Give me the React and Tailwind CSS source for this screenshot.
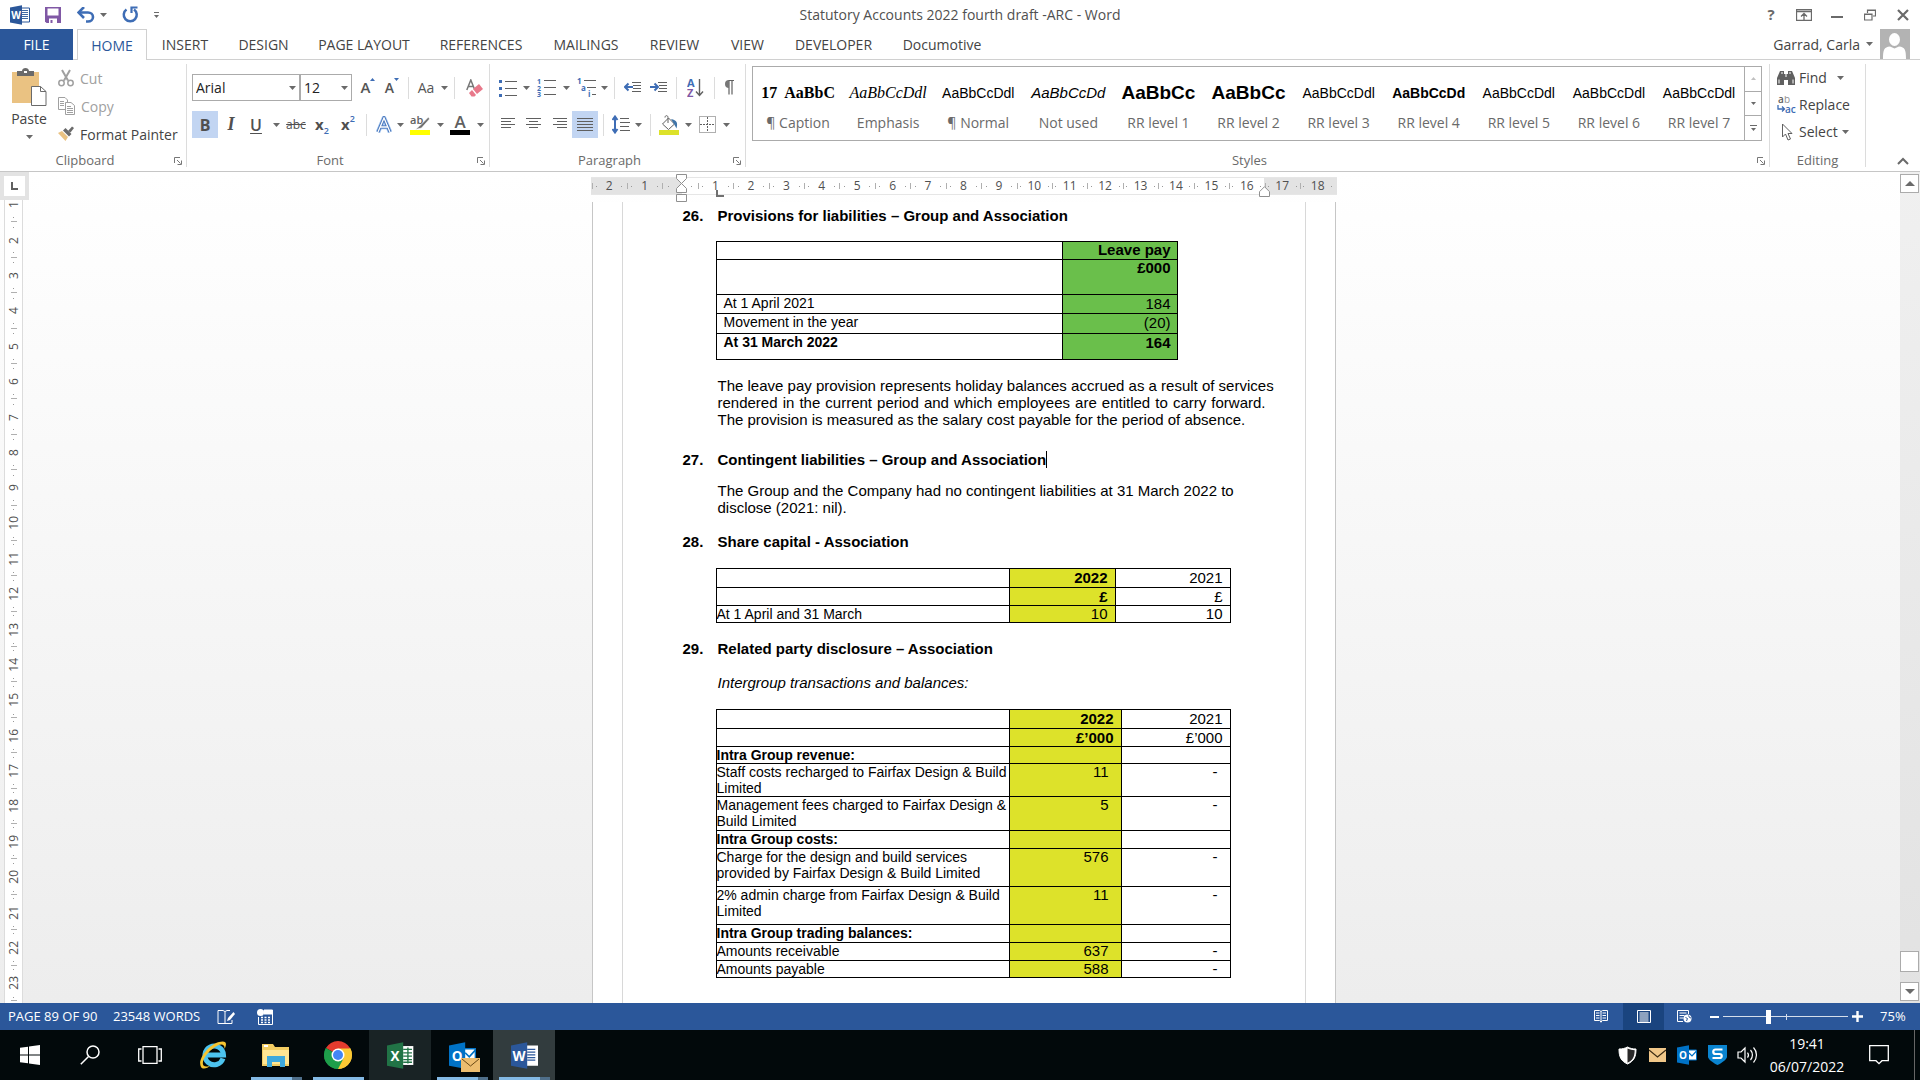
import React, { useState } from 'react';
import clsx from 'clsx';

const TABS = [
  { name: 'INSERT', width: 'w-[76px]' },
  { name: 'DESIGN', width: 'w-[81px]' },
  { name: 'PAGE LAYOUT', width: 'w-[120px]' },
  { name: 'REFERENCES', width: 'w-[114px]' },
  { name: 'MAILINGS', width: 'w-[96px]' },
  { name: 'REVIEW', width: 'w-[81px]' },
  { name: 'VIEW', width: 'w-[65px]' },
  { name: 'DEVELOPER', width: 'w-[107px]' },
  { name: 'Documotive', width: 'w-[110px]' },
];

const ARIAL = "font-['Liberation_Sans',Arial,sans-serif]";
const TIMES = "font-['Liberation_Serif','Times_New_Roman',serif]";

const STYLES = [
  { name: '¶ Caption', sample: '17  AaBbC', look: `${TIMES} text-base font-bold` },
  { name: 'Emphasis', sample: 'AaBbCcDdl', look: `${TIMES} text-base italic` },
  { name: '¶ Normal', sample: 'AaBbCcDdl', look: `${ARIAL} text-[14px]` },
  { name: 'Not used', sample: 'AaBbCcDd', look: `${ARIAL} text-[15px] italic` },
  { name: 'RR level 1', sample: 'AaBbCc', look: `${ARIAL} text-[19px] font-bold` },
  { name: 'RR level 2', sample: 'AaBbCc', look: `${ARIAL} text-[19px] font-bold` },
  { name: 'RR level 3', sample: 'AaBbCcDdl', look: `${ARIAL} text-[14px]` },
  { name: 'RR level 4', sample: 'AaBbCcDd', look: `${ARIAL} text-[14px] font-bold` },
  { name: 'RR level 5', sample: 'AaBbCcDdl', look: `${ARIAL} text-[14px]` },
  { name: 'RR level 6', sample: 'AaBbCcDdl', look: `${ARIAL} text-[14px]` },
  { name: 'RR level 7', sample: 'AaBbCcDdl', look: `${ARIAL} text-[14px]` },
];

const RELATED_ROWS = [
  { label: 'Intra Group revenue:', heading: true, height: 'h-[17px]' },
  { label: 'Staff costs recharged to Fairfax Design & Build Limited', now: '11', before: '-', height: 'h-[33px]' },
  { label: 'Management fees charged to Fairfax Design & Build Limited', now: '5', before: '-', height: 'h-[34px]' },
  { label: 'Intra Group costs:', heading: true, height: 'h-[18px]' },
  { label: 'Charge for the design and build services provided by Fairfax Design & Build Limited', now: '576', before: '-', height: 'h-[38px]' },
  { label: '2% admin charge from Fairfax Design & Build Limited', now: '11', before: '-', height: 'h-[38px]' },
  { label: 'Intra Group trading balances:', heading: true, height: 'h-[18px]' },
  { label: 'Amounts receivable', now: '637', before: '-', height: 'h-[18px]' },
  { label: 'Amounts payable', now: '588', before: '-', height: 'h-[17px]' },
];

/* ---------- small building blocks ---------- */

const Svg = ({ w, h, children, className }) => (
  <svg width={w} height={h} viewBox={`0 0 ${w} ${h}`} fill="none" className={clsx('block shrink-0', className)} aria-hidden="true">
    {children}
  </svg>
);

const Caret = ({ color = '#6a6a6a' }) => (
  <Svg w={7} h={4}>
    <path d="M0 0h7L3.5 4z" fill={color} />
  </Svg>
);

const Tool = ({ label, width, active, children }) => (
  <button
    aria-label={label}
    className={clsx('flex h-[27px] shrink-0 items-center justify-center', width, active && 'bg-[#c2d5f2]')}
  >
    {children}
  </button>
);

const Sep = ({ width }) => (
  <span className={clsx('flex h-[22px] shrink-0 justify-center', width)}>
    <span className="w-px bg-[#dcdcdc]" />
  </span>
);

const Launcher = ({ label }) => (
  <button aria-label={label} className="flex size-4 items-center justify-center">
    <Svg w={8} h={8}>
      <path d="M.5 6V.5H6M3 3l3.5 3.5M7.500 3.500v4h-4" stroke="#777" />
    </Svg>
  </button>
);

const Group = ({ name, width, launcher, children }) => (
  <section className={clsx('my-1 flex shrink-0 flex-col border-r border-[#dcdcdc]', width)}>
    <div className="min-h-0 flex-1">{children}</div>
    <div className="flex h-3 items-center text-[13px] text-[#6a6a6a]">
      <span className="flex-1 text-center">{name}</span>
      {launcher && <Launcher label={`${name} settings`} />}
    </div>
  </section>
);

const Lines = ({ rows }) => (
  <Svg w={16} h={13}>
    {rows.map(([x, w], i) => (
      <rect key={i} x={x} y={i * 3} width={w} height="1" fill="#606060" />
    ))}
  </Svg>
);

/* ---------- application logos ---------- */

const OfficeLogo = ({ letter, color, size = 20, ink = '#fff', children }) => (
  <svg width={size} height={size} viewBox="0 0 20 20" aria-hidden="true" className="block shrink-0">
    {children}
    <path d="M0 2.500 12 .2v19.600L0 17.500z" fill={color} />
    <text x="6" y="13.800" textAnchor="middle" fontSize="10" fontWeight="700" fontFamily="Open Sans, sans-serif" fill={ink}>
      {letter}
    </text>
  </svg>
);

const WordLogo = ({ size, dark }) => (
  <OfficeLogo letter="W" color="#2b579a" size={size}>
    <path d="M11 3h8.500v14H11z" fill="#fff" stroke={dark ? '#fff' : '#2b579a'} />
    <path d="M12 5.500h6M12 7.500h6M12 9.500h6M12 11.500h6M12 13.500h6" stroke="#2b579a" strokeWidth=".9" />
  </OfficeLogo>
);

const ExcelLogo = () => (
  <OfficeLogo letter="X" color="#217346" size={27}>
    <path d="M11 3h8.500v14H11z" fill="#fff" />
    <path d="M12 5.500h6.500M12 8h6.500M12 10.500h6.500M12 13h6.500M12 15h6.500M15.500 4v12" stroke="#217346" />
  </OfficeLogo>
);

const OutlookLogo = ({ size, badge }) => (
  <div className="relative">
    <OfficeLogo letter="O" color="#0072c6" size={size}>
      <path d="M11 5h8.500v10H11z" fill="#fff" stroke="#0072c6" />
      <path d="m12 8 3 3 4.500-5" stroke="#0072c6" strokeWidth="1.200" fill="none" />
    </OfficeLogo>
    {badge && (
      <span className="absolute top-4 left-3">
        <Svg w={19} h={14}>
          <path d="M0 0h19v14H0z" fill="#edbd6f" />
          <path d="m1 1 8.500 7L18 1" stroke="#6b4a17" />
        </Svg>
      </span>
    )}
  </div>
);

/* ---------- title bar and tabs ---------- */

const TitleBar = () => (
  <header className="relative flex h-[29px] items-center justify-between">
    <div className="flex items-center pl-[10px]">
      <WordLogo size={20} />
      <button aria-label="Save" className="ml-[15px]">
        <Svg w={16} h={16}>
          <path d="M0 0h16v16H1.500L0 14.500z" fill="#8058a5" />
          <path d="M2.500 1.500h11v7h-11zM4 11.500h8V16H4z" fill="#fff" />
          <path d="M5.500 13h2v3h-2z" fill="#8058a5" />
        </Svg>
      </button>
      <button aria-label="Undo" className="ml-[16px]">
        <Svg w={18} h={16}>
          <path d="M3 5.500h8a5 4.500 0 0 1 0 9H9" stroke="#3e6db5" strokeWidth="2.600" />
          <path d="m7 0-5.500 5.500L7 11" stroke="#3e6db5" strokeWidth="2.600" />
        </Svg>
      </button>
      <button aria-label="Undo list" className="ml-[5px]"><Caret /></button>
      <button aria-label="Repeat" className="ml-[15px]">
        <Svg w={17} h={17}>
          <path d="M4.500 3.500a6.500 6.500 0 1 0 7.500 0" stroke="#3e6db5" strokeWidth="2.500" />
          <path d="M9.500 7V1.500h6" stroke="#3e6db5" strokeWidth="2.200" />
        </Svg>
      </button>
      <button aria-label="Customise Quick Access Toolbar" className="ml-[15px] flex flex-col items-center gap-[2px]">
        <span className="h-px w-[5px] bg-[#6a6a6a]" />
        <Svg w={5} h={3}><path d="M0 0h5L2.500 3z" fill="#6a6a6a" /></Svg>
      </button>
    </div>
    <h1 className="absolute inset-x-0 text-center text-[14px] text-[#505050]">
      Statutory Accounts 2022 fourth draft -ARC - Word
    </h1>
    <div className="relative flex items-center pr-px text-[#6a6a6a]">
      <button aria-label="Help" className="flex w-8 justify-center text-[15px] font-bold">?</button>
      <button aria-label="Ribbon display options" className="flex w-[34px] justify-center">
        <Svg w={16} h={12}>
          <path d="M.5.5h15v11H.5zM.5 2.500h15M8 11V5M5 7.500l3-3 3 3" stroke="#6a6a6a" strokeWidth="1.300" />
        </Svg>
      </button>
      <button aria-label="Minimise" className="flex w-8 justify-center pt-1">
        <span className="h-[2px] w-3 bg-[#6a6a6a]" />
      </button>
      <button aria-label="Restore" className="flex w-[34px] justify-center">
        <Svg w={12} h={12}>
          <path d="M.5 5h7.500v6H.5zM.5 5.500H8M3.500 4V1h8v6H9M3.500 1.500h8" stroke="#6a6a6a" strokeWidth="1.200" />
        </Svg>
      </button>
      <button aria-label="Close" className="flex w-8 justify-center">
        <Svg w={12} h={12}>
          <path d="m1 1 10 10M11 1 1 11" stroke="#6a6a6a" strokeWidth="2.200" />
        </Svg>
      </button>
    </div>
  </header>
);

const TabBar = () => (
  <nav className="flex h-[31px] border-b border-[#d0d0d0] text-[14px] whitespace-nowrap text-[#444]">
    <button className="h-[31px] w-[73px] bg-[#2b579a] text-white">FILE</button>
    <button className="ml-1 h-[31px] w-[70px] border border-b-0 border-[#d0d0d0] bg-white text-[#2b579a]">HOME</button>
    {TABS.map((tab) => (
      <button key={tab.name} className={clsx('shrink-0', tab.width)}>{tab.name}</button>
    ))}
    <div className="ml-auto flex items-center pr-[10px]">
      <button className="flex items-center gap-[6px]">
        Garrad, Carla
        <Caret />
      </button>
      <Svg w={30} h={30} className="ml-[7px]">
        <path d="M0 0h30v30H0z" fill="#b3b3b3" />
        <ellipse cx="14.500" cy="10.500" rx="5.500" ry="6.500" fill="#fff" />
        <path d="M3 30c0-9 1-12 7-12.500l4.500 2 4.500-2c6 .5 7 3.500 7 12.500z" fill="#fff" />
      </Svg>
    </div>
  </nav>
);

/* ---------- ribbon groups ---------- */

const ClipboardGroup = () => (
  <Group name="Clipboard" width="w-[187px]" launcher>
    <div className="flex whitespace-nowrap">
      <button className="flex w-[58px] flex-col items-center pt-1 text-[14px] text-[#444]">
        <Svg w={35} h={39}>
          <path d="M0 4h27v31H0z" fill="#eac282" />
          <path d="M5 8V3h5c0-4 7-4 7 0h5v5z" fill="#6a6a6a" />
          <path d="M12 3h3v2h-3z" fill="#fff" />
          <path d="M19.500 18.500h9l5.500 5v14H19.500z" fill="#fff" stroke="#6a6a6a" />
          <path d="M28.500 18.500v5H34" stroke="#6a6a6a" />
        </Svg>
        <span className="mt-[2px] leading-5">Paste</span>
        <span className="mt-[6px]"><Caret /></span>
      </button>
      <div className="text-[14px]">
        <button className="flex h-7 items-center gap-[6px] text-[#a0a0a0]">
          <Svg w={16} h={18}>
            <path d="m4 1 6 10.500M12 1 6 11.500" stroke="#a0a0a0" strokeWidth="2" />
            <circle cx="3.500" cy="14" r="2.700" stroke="#a0a0a0" strokeWidth="1.500" />
            <circle cx="12.500" cy="14" r="2.700" stroke="#a0a0a0" strokeWidth="1.500" />
          </Svg>
          Cut
        </button>
        <button className="flex h-7 items-center gap-[6px] text-[#a0a0a0]">
          <Svg w={17} h={18}>
            <path d="M.5.5H7L9.500 3v9.500h-9z" fill="#fff" stroke="#a0a0a0" />
            <path d="M2 4.500h4M2 6.500h4M2 8.500h4" stroke="#a0a0a0" />
            <path d="M7.500 5.500H13L16.500 8.500v9h-9z" fill="#fff" stroke="#a0a0a0" />
            <path d="M9 9.500h4M9 11.500h6M9 13.500h6M9 15.500h6" stroke="#a0a0a0" />
          </Svg>
          Copy
        </button>
        <button className="flex h-7 items-center gap-[6px] text-[#444]">
          <Svg w={16} h={16}>
            <path d="m0 7 4-2 6 6-2.500 4z" fill="#eac282" />
            <path d="m5 4.500 2.500-2.500 6 6L11 10.500z" fill="#6a6a6a" />
            <path d="m10 5 4-4.500 2 1.500-3.500 4.500z" fill="#6a6a6a" />
          </Svg>
          Format Painter
        </button>
      </div>
    </div>
  </Group>
);

const Combo = ({ label, value, width }) => (
  <div className={clsx('relative flex h-[27px] shrink-0 items-center', width)}>
    <select
      aria-label={label}
      defaultValue={value}
      className="h-full w-full appearance-none border border-[#ababab] bg-white pl-[3px] text-[14px] text-[#222]"
    >
      <option>{value}</option>
    </select>
    <span className="pointer-events-none absolute right-1"><Caret /></span>
  </div>
);

const FontGroup = () => (
  <Group name="Font" width="w-[303px]" launcher>
    <div className="flex items-center pt-[10px] pl-[5px] text-[#555]">
      <Combo label="Font name" value="Arial" width="w-[108px]" />
      <Combo label="Font size" value="12" width="w-[52px]" />
      <span className="w-1 shrink-0" />
      <Tool label="Grow font" width="w-6">
        <span className="text-[15px] font-semibold">A</span>
        <span className="self-start pt-1"><Svg w={5} h={3}><path d="M2.500 0 5 3H0z" fill="#3e6db5" /></Svg></span>
      </Tool>
      <Tool label="Shrink font" width="w-6">
        <span className="text-[14px] font-semibold">A</span>
        <span className="self-start pt-1"><Svg w={5} h={3}><path d="M0 0h5L2.500 3z" fill="#3e6db5" /></Svg></span>
      </Tool>
      <Sep width="w-2" />
      <Tool label="Change case" width="w-7"><span className="text-[14px]">Aa</span></Tool>
      <Tool label="Change case list" width="w-2"><Caret /></Tool>
      <Sep width="w-3" />
      <Tool label="Clear formatting" width="w-7">
        <Svg w={17} h={18}>
          <path d="m.8 11 4-10 4 10M2.200 7.500h5" stroke="#777" strokeWidth="1.500" />
          <path d="m7 10 6-5 4 5-6 5z" fill="#e8788a" />
          <path d="m6 11 4 5-1.500 1.500H5.500L3 14z" fill="#e8788a" />
        </Svg>
      </Tool>
    </div>
    <div className="flex items-center pt-[10px] pl-[5px] text-[#505050]">
      <Tool label="Bold" width="w-[26px]" active><span className="text-[16px] font-bold">B</span></Tool>
      <Tool label="Italic" width="w-[26px]"><span className={`${TIMES} text-[18px] font-bold italic`}>I</span></Tool>
      <Tool label="Underline" width="w-6"><span className="text-[16px] font-semibold underline underline-offset-2">U</span></Tool>
      <Tool label="Underline list" width="w-4"><Caret /></Tool>
      <Tool label="Strikethrough" width="w-6"><span className="text-[12px] line-through">abc</span></Tool>
      <Tool label="Subscript" width="w-7">
        <span className="text-[15px] font-bold">x</span>
        <span className="pt-3 text-[9px] font-semibold text-[#3e6db5]">2</span>
      </Tool>
      <Tool label="Superscript" width="w-6">
        <span className="text-[15px] font-bold">x</span>
        <span className="pb-3 text-[9px] font-semibold text-[#3e6db5]">2</span>
      </Tool>
      <Sep width="w-3" />
      <Tool label="Text effects" width="w-6">
        <Svg w={16} h={18}>
          <path d="M2 16 8 2l6 14M4.500 11h7" stroke="#9cc0ee" strokeWidth="4.500" strokeLinejoin="round" />
          <path d="M2 16 8 2l6 14M4.500 11h7" stroke="#3e6db5" strokeWidth="3" />
          <path d="M2 16 8 2l6 14M4.500 11h7" stroke="#fff" strokeWidth="1.300" />
        </Svg>
      </Tool>
      <Tool label="Text effects list" width="w-2"><Caret /></Tool>
      <Tool label="Highlight colour" width="w-8">
        <Svg w={20} h={20}>
          <text x="0" y="9" fontSize="11" fontWeight="600" fontFamily="Open Sans, sans-serif" fill="#606060">ab</text>
          <path d="m18.500 2-9 9-4 3.500 6-1.500 8-9z" fill="#707070" stroke="#fff" strokeWidth=".6" />
          <path d="M0 15h20v5H0z" fill="#ff0" />
        </Svg>
      </Tool>
      <Tool label="Highlight colour list" width="w-2"><Caret /></Tool>
      <Tool label="Font colour" width="w-8">
        <Svg w={20} h={20}>
          <text x="10" y="13" textAnchor="middle" fontSize="17" fontWeight="600" fontFamily="Open Sans, sans-serif" fill="#606060">A</text>
          <path d="M0 15h20v5H0z" fill="#000" />
        </Svg>
      </Tool>
      <Tool label="Font colour list" width="w-2"><Caret /></Tool>
    </div>
  </Group>
);

const IndentIcon = ({ flip }) => (
  <Svg w={18} h={13}>
    <path d="M8 1.500h9M9 4.500h8M9 7.500h8M8 10.500h9" stroke="#606060" />
    <path
      d={flip ? 'M0 6h7M4.500 2.500 8 6 4.500 9.500' : 'M1 6h8M4.500 2.500 1 6l3.500 3.500'}
      stroke="#3e6db5"
      strokeWidth="2"
    />
  </Svg>
);

const ParagraphGroup = () => (
  <Group name="Paragraph" width="w-[256px]" launcher>
    <div className="flex items-center pt-[10px] pl-[6px]">
      <Tool label="Bullets" width="w-6">
        <Svg w={18} h={18}>
          <path d="M0 1h3v3H0zM0 8h3v3H0zM0 15h3v3H0z" fill="#3e6db5" />
          <path d="M6 2.500h12M6 9.500h12M6 16.500h12" stroke="#606060" />
        </Svg>
      </Tool>
      <Tool label="Bullets list" width="w-3"><Caret /></Tool>
      <Tool label="Numbering" width="w-7">
        <Svg w={19} h={19}>
          <g fill="#3e6db5" fontSize="7" fontWeight="700" fontFamily="Open Sans, sans-serif">
            <text x="0" y="6">1</text><text x="0" y="12.500">2</text><text x="0" y="19">3</text>
          </g>
          <path d="M7 2.500h12M7 9.500h12M7 16.500h12" stroke="#606060" />
        </Svg>
      </Tool>
      <Tool label="Numbering list" width="w-3"><Caret /></Tool>
      <Tool label="Multilevel list" width="w-7">
        <Svg w={19} h={19}>
          <g fill="#3e6db5" fontSize="8" fontWeight="700" fontFamily="Open Sans, sans-serif">
            <text x="0" y="6">1</text><text x="4" y="12.500">a</text><text x="11" y="19">i</text>
          </g>
          <path d="M7 2.500h12M10 9.500h9M15 16.500h4" stroke="#606060" />
        </Svg>
      </Tool>
      <Tool label="Multilevel list options" width="w-2"><Caret /></Tool>
      <Sep width="w-3" />
      <Tool label="Decrease indent" width="w-[26px]"><IndentIcon /></Tool>
      <Tool label="Increase indent" width="w-[26px]"><IndentIcon flip /></Tool>
      <Sep width="w-2" />
      <Tool label="Sort" width="w-[30px]">
        <Svg w={17} h={20}>
          <g fontSize="11" fontWeight="700" fontFamily="Open Sans, sans-serif">
            <text x="0" y="9" fill="#3e6db5">A</text>
            <text x="0" y="19" fill="#8058a5">Z</text>
          </g>
          <path d="M12.500 1v16M9 13.500l3.500 4 3.500-4" stroke="#606060" strokeWidth="1.400" />
        </Svg>
      </Tool>
      <Sep width="w-2" />
      <Tool label="Show paragraph marks" width="w-5">
        <Svg w={11} h={15}>
          <path d="M5 .5h6M6 .5v14M9 .5v14" stroke="#606060" strokeWidth="1.200" />
          <path d="M6 0a3.800 3.800 0 0 0 0 8z" fill="#777" />
        </Svg>
      </Tool>
    </div>
    <div className="flex items-center pt-[10px] pl-[6px]">
      <Tool label="Align left" width="w-6"><Lines rows={[[1, 14], [1, 10], [1, 14], [1, 10]]} /></Tool>
      <Tool label="Centre" width="w-7"><Lines rows={[[0, 15], [3, 9], [0, 15], [3, 9]]} /></Tool>
      <Tool label="Align right" width="w-6"><Lines rows={[[1, 14], [5, 10], [1, 14], [5, 10]]} /></Tool>
      <Tool label="Justify" width="w-[26px]" active><Lines rows={[[0, 16], [0, 16], [0, 16], [0, 16], [0, 16]]} /></Tool>
      <Sep width="w-[10px]" />
      <Tool label="Line spacing" width="w-[26px]">
        <Svg w={18} h={19}>
          <path d="M3 2v15M.5 5 3 1.500 5.500 5M.5 14 3 17.500 5.500 14" stroke="#3e6db5" strokeWidth="2" />
          <path d="M8 3.500h9M8 7.500h10M8 11.500h9M8 15.500h10" stroke="#606060" />
        </Svg>
      </Tool>
      <Tool label="Line spacing list" width="w-2"><Caret /></Tool>
      <Sep width="w-4" />
      <Tool label="Shading" width="w-[22px]">
        <Svg w={20} h={20}>
          <path d="m3.500 9 6-6 6 6-6 5.500z" fill="#fff" stroke="#606060" />
          <path d="M9 8V2.500c0-2.500-3-2.500-3 0" stroke="#606060" />
          <path d="M12 4c6 1 7 4 5.500 9.500L15 9z" fill="#3f74a8" />
          <path d="M0 15h20v5H0z" fill="#dde22a" />
        </Svg>
      </Tool>
      <Tool label="Shading list" width="w-4"><Caret /></Tool>
      <Tool label="Borders" width="w-[22px]">
        <Svg w={17} h={17}>
          <path d="M.5.5h16v16H.5z" stroke="#606060" strokeDasharray="1 1" />
          <path d="M8.500 1v15M1 8.500h15" stroke="#606060" strokeDasharray="2 1" />
        </Svg>
      </Tool>
      <Tool label="Borders list" width="w-4"><Caret /></Tool>
    </div>
  </Group>
);

const StylesGroup = () => (
  <Group name="Styles" width="min-w-0 flex-1" launcher>
    <div className="mt-[2px] mr-[7px] ml-[6px] flex h-[75px] border border-[#ababab]">
      <div className="flex min-w-0 flex-1">
        {STYLES.map((style) => (
          <button key={style.name} className="flex min-w-0 flex-1 flex-col items-center whitespace-pre">
            <span className={clsx('mt-[14px] h-6 leading-6 text-black', style.look)}>
              {style.sample}
            </span>
            <span className="mt-2 text-[14px] leading-5 text-[#6a6a6a]">{style.name}</span>
          </button>
        ))}
      </div>
      <div className="flex w-[17px] flex-col border-l border-[#ababab]">
        <button aria-label="Previous styles" className="flex flex-1 items-center justify-center">
          <Svg w={5} h={3}><path d="M2.500 0 5 3H0z" fill="#c0c0c0" /></Svg>
        </button>
        <button aria-label="Next styles" className="flex flex-1 items-center justify-center border-y border-[#ababab]">
          <Svg w={5} h={3}><path d="M0 0h5L2.500 3z" fill="#6a6a6a" /></Svg>
        </button>
        <button aria-label="More styles" className="flex flex-1 flex-col items-center justify-center gap-[2px]">
          <span className="h-px w-[7px] bg-[#6a6a6a]" />
          <Svg w={5} h={3}><path d="M0 0h5L2.500 3z" fill="#6a6a6a" /></Svg>
        </button>
      </div>
    </div>
  </Group>
);

const EditingGroup = () => (
  <Group name="Editing" width="w-[96px]">
    <div className="pl-[7px] text-[14px] text-[#444]">
      <button className="flex h-[27px] items-center gap-1">
        <Svg w={18} h={16}>
          <path d="M0 8 3 1h4v14H0zM11 1h4l3 7v7h-7z" fill="#606060" />
          <path d="M7 4h4v6H7z" fill="#606060" />
          <path d="M2 9.500v4M16 9.500v4M9 4v3M4 3h2M12 3h2" stroke="#fff" />
        </Svg>
        <span className="mr-[6px]">Find</span>
        <Caret />
      </button>
      <button className="flex h-[27px] items-center gap-1">
        <Svg w={20} h={18} className="-mr-[2px]">
          <g fontSize="10" fontFamily="Open Sans, sans-serif">
            <text x="1" y="7" fontWeight="600" fill="#606060">a</text>
            <text x="7" y="7" fill="#909090">b</text>
            <text x="8" y="17" fontWeight="600" fill="#3e6db5">ac</text>
          </g>
          <path d="M1 9v4h6M5 10.500 7.500 13 5 15.500" stroke="#3e6db5" strokeWidth="1.300" />
        </Svg>
        Replace
      </button>
      <button className="flex h-[27px] items-center gap-1">
        <Svg w={18} h={18}>
          <path d="M5.500 1v13l3-3 2.500 6 2.500-1-2.500-5.500h4z" stroke="#606060" />
        </Svg>
        <span>Select</span>
        <Caret />
      </button>
    </div>
  </Group>
);

const Ribbon = () => (
  <div className="flex h-[112px] border-b border-[#c6c6c6]">
    <ClipboardGroup />
    <FontGroup />
    <ParagraphGroup />
    <StylesGroup />
    <EditingGroup />
    <div className="flex w-[54px] shrink-0 items-end justify-end pr-[11px] pb-[6px]">
      <button aria-label="Collapse the ribbon">
        <Svg w={12} h={8}><path d="m1 7 5-5 5 5" stroke="#6a6a6a" strokeWidth="2" /></Svg>
      </button>
    </div>
  </div>
);

/* ---------- rulers ---------- */

// each cell is one centimetre wide and is centred on its number
const RULER_CM = Array.from({ length: 21 }, (_, i) => i - 2);

const HorizontalRuler = () => (
  <div className="relative h-[18px] w-[746px] bg-white text-[12px] text-[#505050]">
    <div className="absolute inset-y-0 left-0 w-[91px] bg-[#e3e3e3]" />
    <div className="absolute inset-y-0 right-0 w-[73px] bg-[#e3e3e3]" />
    <div className="relative flex h-full border-y border-[#e6e6e6] pr-px pl-px">
      {RULER_CM.map((cm) => (
        <div key={cm} className="relative flex flex-1 items-center justify-around">
          <span className="absolute left-0 h-[6px] w-px bg-[#b0b0b0]" />
          <span className="size-px bg-[#999]" />
          <span className="leading-4">{cm === 0 ? '' : Math.abs(cm)}</span>
          <span className="size-px bg-[#999]" />
        </div>
      ))}
    </div>
    <span className="absolute -top-[3px] left-[85px]">
      <Svg w={12} h={29}>
        <path d="M.5.5h10v4l-5 5-5-5zM5.500 9.500l5 5v4H.500v-4zM.500 20.500h10v7H.500z" fill="#fff" stroke="#909090" />
      </Svg>
    </span>
    <span className="absolute top-[13px] left-[125px] h-[7px] w-[8px] border-b-2 border-l-2 border-[#707070]" />
    <span className="absolute top-[9px] right-[67px]">
      <Svg w={11} h={11}>
        <path d="m5.500.7 5 5v4.800H.5V5.700z" fill="#fff" stroke="#909090" />
      </Svg>
    </span>
  </div>
);

const VerticalRuler = () => (
  <div className="flex w-[29px] shrink-0 flex-col">
    <div className="flex h-7 shrink-0 items-center justify-center border-4 border-[#e3e3e3] bg-white">
      <span className="h-[8px] w-[7px] border-b-2 border-l-2 border-[#606060]" />
    </div>
    <div className="ml-1 flex min-h-0 w-[19px] flex-1 flex-col justify-end overflow-hidden border-x border-[#dcdcdc] bg-white pb-[2px] text-[12px] text-[#505050]">
      <div className="grid h-[814px] shrink-0 auto-rows-fr">
        {Array.from({ length: 23 }, (_, i) => (
          <div key={i} className="relative flex flex-col items-center justify-around">
            <span className="size-px bg-[#999]" />
            <span className="rotate-180 leading-4 [writing-mode:vertical-rl]">{i + 1}</span>
            <span className="size-px bg-[#999]" />
            <span className="absolute bottom-0 h-px w-[6px] bg-[#b0b0b0]" />
          </div>
        ))}
      </div>
    </div>
  </div>
);

/* ---------- the document ---------- */

const Heading = ({ number, children, className }) => (
  <h2 className={clsx('flex leading-5 font-bold whitespace-nowrap', className)}>
    <span className="w-[35px] shrink-0">{number}</span>
    <span>{children}</span>
  </h2>
);

const TD = 'border border-black align-top leading-4';
const TABLE = 'ml-[33px] table-fixed border-collapse text-right';
const LABEL = 'text-left text-[14px]';

const LeavePayTable = () => (
  <table className={clsx(TABLE, 'mt-[15px] w-[462px]')}>
    <colgroup>
      <col />
      <col className="w-[115px] bg-[#6abf4b]" />
    </colgroup>
    <tbody>
      <tr className="h-[18px]">
        <td className={TD} />
        <th className={clsx(TD, 'pr-[6px]')}>Leave pay</th>
      </tr>
      <tr className="h-[35px]">
        <td className={TD} />
        <th className={clsx(TD, 'pr-[6px]')}>£000</th>
      </tr>
      <tr className="h-[19px]">
        <td className={clsx(TD, LABEL, 'pl-[7px]')}>At 1 April 2021</td>
        <td className={clsx(TD, 'pt-px pr-[6px]')}>184</td>
      </tr>
      <tr className="h-[20px]">
        <td className={clsx(TD, LABEL, 'pl-[7px]')}>Movement in the year</td>
        <td className={clsx(TD, 'pt-px pr-[6px]')}>(20)</td>
      </tr>
      <tr className="h-[26px]">
        <th className={clsx(TD, LABEL, 'pl-[7px]')}>At 31 March 2022</th>
        <th className={clsx(TD, 'pt-px pr-[6px]')}>164</th>
      </tr>
    </tbody>
  </table>
);

const ShareCapitalTable = () => (
  <table className={clsx(TABLE, 'mt-4 w-[515px]')}>
    <colgroup>
      <col />
      <col className="w-[106px] bg-[#dde22a]" />
      <col className="w-[115px]" />
    </colgroup>
    <tbody>
      <tr className="h-[19px]">
        <td className={TD} />
        <th className={clsx(TD, 'pt-px pr-[7px]')}>2022</th>
        <td className={clsx(TD, 'pt-px pr-[7px]')}>2021</td>
      </tr>
      <tr className="h-[18px]">
        <td className={TD} />
        <th className={clsx(TD, 'pt-px pr-[7px]')}>£</th>
        <td className={clsx(TD, 'pt-px pr-[7px]')}>£</td>
      </tr>
      <tr className="h-[17px]">
        <td className={clsx(TD, LABEL)}>At 1 April and 31 March</td>
        <td className={clsx(TD, 'pr-[7px]')}>10</td>
        <td className={clsx(TD, 'pr-[7px]')}>10</td>
      </tr>
    </tbody>
  </table>
);

const RelatedPartyTable = () => (
  <table className={clsx(TABLE, 'mt-4 w-[515px]')}>
    <colgroup>
      <col />
      <col className="w-[112px] bg-[#dde22a]" />
      <col className="w-[109px]" />
    </colgroup>
    <tbody>
      <tr className="h-[19px]">
        <td className={TD} />
        <th className={clsx(TD, 'pt-px pr-[7px]')}>2022</th>
        <td className={clsx(TD, 'pt-px pr-[7px]')}>2021</td>
      </tr>
      <tr className="h-[18px]">
        <td className={TD} />
        <th className={clsx(TD, 'pt-px pr-[7px]')}>£’000</th>
        <td className={clsx(TD, 'pt-px pr-[7px]')}>£’000</td>
      </tr>
      {RELATED_ROWS.map((row) => (
        <tr key={row.label} className={row.height}>
          <td className={clsx(TD, LABEL, row.heading && 'font-bold')}>{row.label}</td>
          <td className={clsx(TD, 'pr-[12px]')}>{row.now}</td>
          <td className={clsx(TD, 'pr-[12px]')}>{row.before}</td>
        </tr>
      ))}
    </tbody>
  </table>
);

const Page = () => (
  <div className="min-h-0 w-[744px] flex-1 border-x border-[#c6c6c6] bg-white px-[29px]">
    <article className={clsx(ARIAL, 'h-full border-x border-[#d8d8d8] pt-1 pl-[60px] text-[15px] text-black')}>
      <Heading number="26.">Provisions for liabilities – Group and Association</Heading>
      <LeavePayTable />
      <p className="mt-[17px] ml-[35px] w-[548px] leading-[17px] whitespace-nowrap">
        <span className="block">The leave pay provision represents holiday balances accrued as a result of services </span>
        <span className="block [text-align-last:justify]">rendered in the current period and which employees are entitled to carry forward. </span>
        <span className="block">The provision is measured as the salary cost payable for the period of absence.</span>
      </p>

      <Heading number="27." className="mt-[22px]">
        <span className="border-r border-black">Contingent liabilities – Group and Association</span>
      </Heading>
      <p className="mt-3 ml-[35px] w-[548px] leading-[17px]">
        The Group and the Company had no contingent liabilities at 31 March 2022 to disclose (2021: nil).
      </p>

      <Heading number="28." className="mt-4">Share capital - Association</Heading>
      <ShareCapitalTable />

      <Heading number="29." className="mt-4">Related party disclosure – Association</Heading>
      <p className="mt-[14px] ml-[35px] leading-5 italic">Intergroup transactions and balances:</p>
      <RelatedPartyTable />
    </article>
  </div>
);

const ScrollBar = () => (
  <div className="flex w-[20px] shrink-0 flex-col items-stretch bg-linear-to-b from-[#f0f0f0] to-[#e2e2e2] pt-[2px] pr-px pb-[2px]">
    <button aria-label="Scroll up" className="flex h-[19px] items-center justify-center border border-[#ababab] bg-white">
      <Svg w={10} h={5}><path d="m5 0 5 5H0z" fill="#6a6a6a" /></Svg>
    </button>
    <div className="flex-1" />
    <div className="mb-[10px] h-[21px] border border-[#ababab] bg-white" />
    <button aria-label="Scroll down" className="flex h-[19px] items-center justify-center border border-[#ababab] bg-white">
      <Svg w={10} h={5}><path d="M0 0h10L5 5z" fill="#6a6a6a" /></Svg>
    </button>
  </div>
);

/* ---------- status bar and taskbar ---------- */

const StatusBar = () => {
  const [zoom, setZoom] = useState(75);

  return (
    <footer className="flex h-[27px] shrink-0 items-center bg-[#2b579a] text-[13px] whitespace-nowrap text-white">
      <span className="w-[113px] pl-2">PAGE 89 OF 90</span>
      <span className="w-[104px]">23548 WORDS</span>
      <button aria-label="Proofing" className="w-10">
        <Svg w={18} h={16}>
          <path d="M8 2.500v12M8 14.500H1V1.500h5l2 1 2-1h3M8 14.500h7V11" stroke="#fff" />
          <path d="m16.500 3-5.500 6-1 3 3-1 5-6z" fill="#fff" />
        </Svg>
      </button>
      <button aria-label="Macros">
        <Svg w={16} h={16}>
          <circle cx="3.500" cy="3.500" r="3.500" fill="#fff" />
          <path d="M7 1h8.500v4H7zM1.500 8v7.500h14V5" stroke="#fff" />
          <path d="M7 1h8.500v4H7z" fill="#fff" />
          <path d="M4 8.500h9M4 11h9M4 13.500h9" stroke="#fff" strokeWidth="1.500" strokeDasharray="2 1.500" />
        </Svg>
      </button>
      <div className="ml-auto flex h-full items-center">
        <button aria-label="Read mode" className="flex w-[44px] justify-center">
          <Svg w={14} h={13}>
            <path d="M7 1.500v11M.5.5h5l1.500 1 1.500-1h5v10h-5L7 12l-1.500-1.500h-5z" stroke="#fff" />
            <path d="M2 3h3.500M2 5.500h3.500M2 8h3.500M8.500 3H12M8.500 5.500H12M8.500 8H12" stroke="#fff" />
          </Svg>
        </button>
        <button aria-label="Print layout" className="flex h-full w-[41px] items-center justify-center bg-[#1a447f]">
          <Svg w={14} h={13}>
            <path d="M.5.5h13v12H.5zM2.500 3h9M2.500 5h9M2.500 7h9M2.500 9h9M2.500 11h9" stroke="#fff" />
          </Svg>
        </button>
        <button aria-label="Web layout" className="flex w-[41px] justify-center">
          <Svg w={15} h={13}>
            <path d="M6 11.500H.5V.5h11V4M2.500 3h7M2.500 5.500h5M2.500 8h4" stroke="#fff" />
            <circle cx="10.500" cy="8.500" r="4" fill="#fff" />
            <path d="m8.500 7.500 2 1-1 2.500M11.500 5.500l1 2 1.500.5" stroke="#2b579a" />
          </Svg>
        </button>
        <button aria-label="Zoom out" className="ml-[5px] h-[2px] w-[9px] bg-white" />
        <div className="relative mx-1 flex h-full w-[125px] items-center">
          <span className="absolute inset-x-0 h-px bg-[#d5deeb]" />
          <span className="absolute left-1/2 h-[6px] w-px bg-[#d5deeb]" />
          <input
            type="range"
            aria-label="Zoom"
            min="10"
            max="190"
            value={zoom}
            onChange={(e) => setZoom(Number(e.target.value))}
            className="relative h-4 w-full appearance-none bg-transparent [&::-webkit-slider-thumb]:h-[14px] [&::-webkit-slider-thumb]:w-[5px] [&::-webkit-slider-thumb]:appearance-none [&::-webkit-slider-thumb]:bg-white"
          />
        </div>
        <button aria-label="Zoom in">
          <Svg w={11} h={11}><path d="M0 5.500h11M5.500 0v11" stroke="#fff" strokeWidth="2.400" /></Svg>
        </button>
        <span className="w-[57px] pl-[17px]">{zoom}%</span>
      </div>
    </footer>
  );
};

const TaskButton = ({ label, tile, running, stacked, children }) => (
  <button aria-label={label} className={clsx('relative flex h-full w-[62px] shrink-0 items-center justify-center', tile)}>
    {children}
    {running && (
      <span className="absolute bottom-0 left-[6px] flex h-[3px] w-[51px]">
        <span className="flex-1 bg-[#83b9e4]" />
        {stacked && <span className="w-[10px] bg-[#4f6f8a]" />}
      </span>
    )}
  </button>
);

const TaskBar = () => (
  <footer className="flex h-[50px] shrink-0 items-center bg-[#02090b] text-white">
    <button aria-label="Start" className="flex w-[60px] justify-center">
      <Svg w={20} h={20}>
        <path d="m0 2.800 8-1.100v7.800H0zM9 1.500 20 0v9.500H9zM0 10.500h8v7.800l-8-1.100zM9 10.500h11V20L9 18.500z" fill="#fff" />
      </Svg>
    </button>
    <button aria-label="Search" className="flex w-[60px] justify-center">
      <Svg w={20} h={20}>
        <circle cx="13" cy="7" r="6" stroke="#fff" strokeWidth="1.500" />
        <path d="M8.500 11.500.8 19.200" stroke="#fff" strokeWidth="1.500" />
      </Svg>
    </button>
    <button aria-label="Task view" className="mr-[3px] flex w-[60px] justify-center">
      <Svg w={24} h={18}>
        <path d="M5 .7h14v16.600H5zM3.500 3H.7v12h2.800M20.500 3h2.800v12h-2.800" stroke="#fff" strokeWidth="1.300" />
      </Svg>
    </button>
    <TaskButton label="Internet Explorer">
      <Svg w={30} h={30}>
        <path d="M24 18.500a9.300 9.300 0 1 1 .5-3.500H8" stroke="#4cc3ef" strokeWidth="5" />
        <path d="M2 27C-2 20 9 5 20 2c8-2 8 2 5.500 7C26 4 22 3 16 7 7 13 2 22 4.500 25.500c2 2 5 1 7.500-.5-4 4-8.500 4.500-10 2z" fill="#f5c431" />
      </Svg>
    </TaskButton>
    <TaskButton label="File Explorer" running stacked>
      <Svg w={28} h={24}>
        <path d="M0 1h11l2 3h14v19H0z" fill="#f3cd63" />
        <path d="M1 7h26v14H1z" fill="#ffe694" />
        <path d="M5 24V13h18v11h-5v-5h-8v5z" fill="#3fa9dc" />
        <path d="M2 2h4v2H2z" fill="#fff" />
      </Svg>
    </TaskButton>
    <TaskButton label="Chrome" running>
      <Svg w={28} h={28}>
        <path d="M14 14 1.900 7A14 14 0 0 1 26.100 7z" fill="#e33b2e" />
        <path d="M14 14 26.100 7A14 14 0 0 1 14 28z" fill="#fcc934" />
        <path d="M14 14v14A14 14 0 0 1 1.900 7z" fill="#1e9e4a" />
        <path d="M14 7.500h12.400A14 14 0 0 1 14 28l5.600-10.700z" fill="#fcc934" />
        <path d="M1.900 7 8.400 17.300 14 20.500 19.600 17.300 14 28A14 14 0 0 1 1.900 7z" fill="#1e9e4a" />
        <circle cx="14" cy="14" r="6.500" fill="#fff" />
        <circle cx="14" cy="14" r="5" fill="#4285f4" />
      </Svg>
    </TaskButton>
    <TaskButton label="Excel" tile="bg-[#192325]"><ExcelLogo /></TaskButton>
    <TaskButton label="Outlook" running stacked><OutlookLogo size={27} badge /></TaskButton>
    <TaskButton label="Word" tile="bg-[#323c3e]" running stacked><WordLogo size={27} dark /></TaskButton>

    <div className="ml-auto flex h-full items-center">
      <button aria-label="Windows Security" className="flex w-[30px] justify-center">
        <Svg w={19} h={19}>
          <path d="M9.500 1c3 1.500 5 2 8.500 2 0 8-2 12-8.500 15C3 15 1 11 1 3c3.500 0 5.500-.5 8.500-2z" fill="#fff" stroke="#fff" />
          <path d="M9.500 2.500c3 1.300 4.500 1.600 7.200 1.700-.2 6.500-1.800 9.900-7.200 12.600z" fill="#2a2a2a" />
        </Svg>
      </button>
      <button aria-label="New mail" className="flex w-[30px] justify-center">
        <Svg w={17} h={14}>
          <path d="M0 0h17v14H0z" fill="#f0c789" />
          <path d="m0 2 8.500 7L17 2" stroke="#3a2a12" strokeWidth="1.200" />
        </Svg>
      </button>
      <button aria-label="Outlook" className="flex w-[30px] justify-center"><OutlookLogo size={20} /></button>
      <button aria-label="Sophos" className="flex w-[30px] justify-center">
        <Svg w={19} h={20}>
          <path d="M0 0h19v12c0 2-5 6-9.500 8C5 18 0 14 0 12z" fill="#0a84d0" />
          <path d="M14.500 4.500H7.500C4.500 4.500 4.500 9 7.500 9h4c3 0 3 4 0 4H4.500" stroke="#fff" strokeWidth="2.200" />
        </Svg>
      </button>
      <button aria-label="Volume" className="flex w-[30px] justify-center">
        <Svg w={21} h={18}>
          <path d="M1 6h3l4-4v14l-4-4H1z" stroke="#fff" strokeWidth="1.200" />
          <path d="M10.500 6.500a4 4 0 0 1 0 5M13.500 4a7.500 7.500 0 0 1 0 10M16.500 1.500a11 11 0 0 1 0 15" stroke="#fff" strokeWidth="1.200" />
        </Svg>
      </button>
      <div className="flex w-[90px] flex-col items-center text-[14px] leading-[23px] whitespace-nowrap">
        <span>19:41</span>
        <span>06/07/2022</span>
      </div>
      <button aria-label="Notifications" className="flex w-[54px] justify-center">
        <Svg w={20} h={20}>
          <path d="M.7.7h18.600v15H13l-3 3-3-3H.7z" stroke="#fff" strokeWidth="1.300" />
        </Svg>
      </button>
      <button aria-label="Show desktop" className="ml-2 h-full w-[6px] border-l border-[#666]" />
    </div>
  </footer>
);

export default function App() {
  return (
    <div className="flex h-screen w-full flex-col overflow-hidden bg-white font-['Open_Sans','Noto_Sans',sans-serif]">
      <div className="shrink-0">
        <TitleBar />
        <TabBar />
        <Ribbon />
      </div>
      <main className="flex min-h-0 flex-1 bg-linear-to-b from-white to-[#ededed]">
        <VerticalRuler />
        <div className="flex min-w-0 flex-1 flex-col items-center overflow-hidden pt-[5px] pr-[2px]">
          <div className="relative z-10 mb-[7px]"><HorizontalRuler /></div>
          <Page />
        </div>
        <ScrollBar />
      </main>
      <StatusBar />
      <TaskBar />
    </div>
  );
}
